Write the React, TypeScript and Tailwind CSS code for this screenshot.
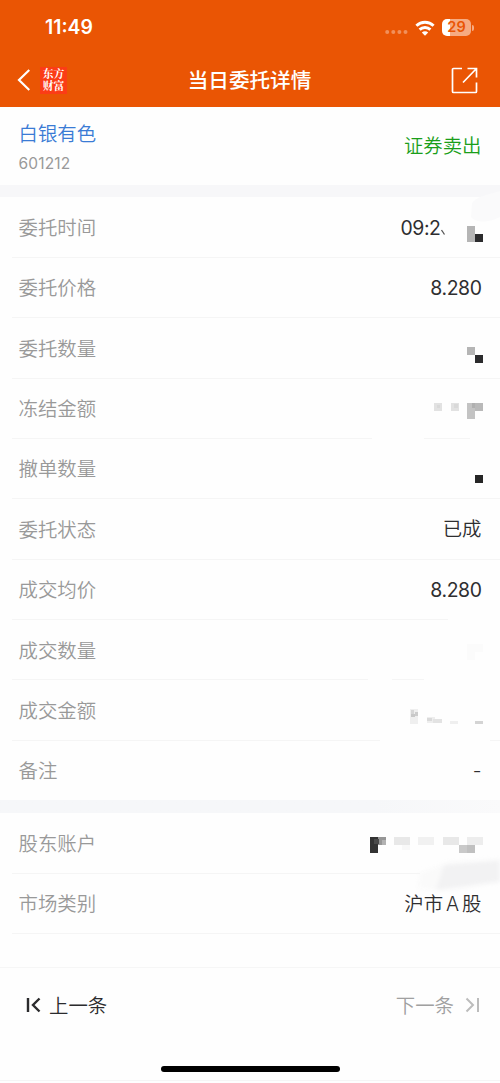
import React from 'react';

type Block = [x: number, y: number, width: number, height: number, fill: string];

interface DetailItem {
  label: string;
  value?: React.ReactNode;
  numeric?: boolean;
  blocks?: Block[];
  // visible parts of the divider under the row, as [from, to]
  divider?: [number, number][];
}

const FULL_DIVIDER: [number, number][] = [[12, 500]];

const ORDER_ITEMS: DetailItem[] = [
  {
    label: '委托时间',
    value: '09:2',
    numeric: true,
    blocks: [[467, 29, 8, 16, '#b5b5b5'], [475, 37, 8, 8, '#2b2b2d']],
  },
  { label: '委托价格', value: '8.280', numeric: true },
  { label: '委托数量', blocks: [[467, 29, 8, 8, '#b5b5b5'], [475, 37, 8, 8, '#2b2b2d']] },
  {
    label: '冻结金额',
    blocks: [
      [434, 25, 8, 8, '#e2e2e2'],
      [437, 27, 3, 3, '#d9d9d9'],
      [451, 25, 8, 8, '#e2e2e2'],
      [454, 26, 4, 4, '#d9d9d9'],
      [467, 25, 8, 16, '#c3c3c3'],
      [475, 25, 8, 8, '#b9b9b9'],
      [472, 25, 3, 5, '#b0b0b0'],
    ],
    divider: [[12, 372], [424, 470]],
  },
  { label: '撤单数量', blocks: [[475, 37, 8, 8, '#262626']] },
  { label: '委托状态', value: '已成' },
  { label: '成交均价', value: '8.280', numeric: true, divider: [[12, 448]] },
  {
    label: '成交数量',
    blocks: [[467, 25, 16, 8, '#fbfbfb'], [467, 33, 8, 8, '#fbfbfb']],
    divider: [[12, 368], [392, 424]],
  },
  {
    label: '成交金额',
    blocks: [
      [410, 29, 8, 15, '#efefef'],
      [411, 30, 3, 4, '#d6d6d6'],
      [415, 32, 3, 4, '#cccccc'],
      [411, 34, 4, 3, '#c8c8c8'],
      [427, 37, 8, 6, '#eeeeee'],
      [427, 38, 5, 3, '#dadada'],
      [433, 39, 9, 4, '#e3e3e3'],
      [450, 41, 8, 3, '#efefef'],
      [475, 41, 8, 3, '#d4d4d4'],
    ],
    divider: [[12, 380], [490, 500]],
  },
  { label: '备注', value: '-', divider: [] },
];

const ACCOUNT_ITEMS: DetailItem[] = [
  {
    label: '股东账户',
    blocks: [
      [370, 24, 8, 16, '#333333'],
      [378, 24, 8, 8, '#969696'],
      [374, 26, 5, 5, '#4a4a4a'],
      [382, 27, 4, 5, '#b2b2b2'],
      [394, 24, 16, 8, '#e8e8e8'],
      [402, 32, 8, 5, '#f8f8f8'],
      [418, 24, 16, 8, '#f1f1f1'],
      [443, 24, 16, 8, '#e8e8e8'],
      [467, 24, 16, 8, '#ededed'],
      [459, 32, 8, 8, '#c9c9c9'],
      [467, 32, 8, 8, '#c0c0c0'],
    ],
    divider: [[12, 420]],
  },
  { label: '市场类别', value: <>沪市<span className="mx-[3px]">A</span>股</> },
];

const StatusBar = () => (
  <div className="flex h-[54px] items-center justify-between pl-[45px] pr-[26px] pt-[2px]">
    <span className="text-[19.4px] font-semibold leading-none">11:49</span>
    <div className="flex items-center">
      <svg width="23" height="18" viewBox="0 0 23 18" fill="#fff" fillOpacity="0.35">
        <circle cx="2.2" cy="13" r="2" />
        <circle cx="8.3" cy="13" r="2" />
        <circle cx="14.4" cy="13" r="2" />
        <circle cx="20.5" cy="13" r="2" />
      </svg>
      <svg className="mb-px ml-[7px]" width="20" height="16" viewBox="0 0 20 16" fill="none" stroke="#fff" strokeWidth="2.9">
        <path d="M1.4 5.8C6.2 1.1 13.8 1.1 18.6 5.800" />
        <path d="M4.600 9.600c3-2.900 7.800-2.900 10.800 0" />
        <path d="M10 15.700l-3.200-3.200c1.700-1.600 4.700-1.600 6.400 0z" fill="#fff" stroke="none" />
      </svg>
      <div className="mb-px ml-[7px] flex h-[17px] w-[29px] items-center justify-center rounded-[5px] bg-linear-to-r from-white from-28% to-[#f6ab82] to-28%">
        <span className="text-[14.5px] font-semibold leading-none text-[#ea5504]">29</span>
      </div>
      <span className="ml-px h-[6px] w-[2px] rounded-r-full bg-[#f6ab82]" />
    </div>
  </div>
);

const NavBar = () => (
  <div className="flex h-[52px] items-center justify-between pl-[17px] pr-[22px]">
    <div className="flex w-[51px] items-center">
      <svg width="13" height="22" viewBox="0 0 13 22" fill="none" stroke="#fff" strokeWidth="2.2">
        <path d="M12.3 1L2 11l10.3 10" />
      </svg>
      <div className="ml-[10px] flex h-[27px] w-[27px] shrink-0 flex-col items-center justify-center bg-[#fb3c16] font-['Noto_Serif_CJK_SC','Noto_Sans_CJK_SC',serif] text-[10.8px] font-bold leading-[12px]">
        <div className="whitespace-pre-line text-center">{'东方\n财富'}</div>
      </div>
    </div>
    <h1 className="ml-[-20px] pt-[2px] text-[20.6px] font-medium leading-none">当日委托详情</h1>
    <svg width="27" height="27" viewBox="0 0 27 27" fill="none" stroke="#fff" strokeWidth="1.7">
      <path d="M11 1.500H2.500a1 1 0 0 0-1 1V24.500a1 1 0 0 0 1 1H24.500a1 1 0 0 0 1-1V15.500" />
      <path d="M16.500 1.500H25.500V10.500M25.500 1.500L12 15.500" />
    </svg>
  </div>
);

const DetailRow = ({ item }: { item: DetailItem }) => {
  const { label, value, numeric, blocks, divider = FULL_DIVIDER } = item;

  return (
    <div className="relative flex h-[60.35px] items-center justify-between px-[18.5px]">
      <span className="pt-[3px] text-[19.4px] font-[350] text-[#999]">{label}</span>
      {value && (
        <span className={`pt-[2px] text-[#2e2e30] ${numeric ? 'text-[19.4px] tracking-[-0.4px]' : 'text-[19.4px] font-[350]'} ${blocks ? 'mr-[41px]' : ''}`}>
          {value}
        </span>
      )}
      <svg className="pointer-events-none absolute left-0 top-0" width="500" height="61" viewBox="0 0 500 61" shapeRendering="crispEdges">
        {blocks?.map(([x, y, width, height, fill], i) => (
          <rect key={i} x={x} y={y} width={width} height={height} fill={fill} />
        ))}
        {value === '09:2' && <path d="M441.500 33l3 4.500" stroke="#555" strokeWidth="1.300" shapeRendering="auto" />}
        {divider.map(([from, to]) => (
          <rect key={from} x={from} y="60" width={to - from} height="1" fill="#f5f5f5" />
        ))}
      </svg>
    </div>
  );
};

const Pager = () => (
  <div className="flex h-[75px] items-center justify-between border-t border-[#f6f6f6] pl-[26px] pr-[20px]">
    <button className="flex items-center text-[19.4px] font-[350] text-[#2b2b2d]">
      <svg width="15" height="16" viewBox="0 0 15 16" fill="none" stroke="currentColor" strokeWidth="2.4">
        <path d="M2 1v14M13.500 1.500L7 8l6.500 6.500" />
      </svg>
      <span className="ml-[8px] pt-[3px]">上一条</span>
    </button>
    <button className="flex items-center text-[19.4px] font-[350] text-[#a0a0a0]">
      <span className="pt-[3px]">下一条</span>
      <svg className="ml-[11px]" width="15" height="16" viewBox="0 0 15 16" fill="none" stroke="#bcbcbc" strokeWidth="2">
        <path d="M13 1v14M1.500 1.500L8 8l-6.500 6.500" />
      </svg>
    </button>
  </div>
);

const App = () => {
  return (
    <div className="h-[1083px] w-[500px] overflow-hidden bg-[#fefefe] font-['Inter','Noto_Sans_CJK_SC',sans-serif]">
      <header className="h-[106.5px] bg-[#ea5504] text-white">
        <StatusBar />
        <NavBar />
      </header>

      <section className="flex h-[78px] items-center justify-between px-[18.5px]">
        <div className="flex flex-col pt-[3px]">
          <span className="text-[19.4px] font-[350] leading-[28px] text-[#3a7bd5]">白银有色</span>
          <span className="mt-[5px] text-[15.5px] leading-[22px] tracking-[0.15px] text-[#999]">601212</span>
        </div>
        <span className="pt-[2px] text-[19.4px] font-[350] text-[#1a9e1a]">证券卖出</span>
      </section>

      <div className="h-[12.5px] bg-[#f7f7f9]" />
      <section className="relative">
        {/* leftover brush smear */}
        <svg className="absolute right-0 top-[-8px]" width="32" height="38" viewBox="0 0 32 38">
          <path d="M4 14C8 8 18 6 32 2V28C20 34 8 34 3 28z" fill="#fafafb" />
        </svg>
        {ORDER_ITEMS.map((item) => (
          <DetailRow key={item.label} item={item} />
        ))}
      </section>

      <div className="h-[12.5px] bg-linear-to-r from-[#f6f7f9] from-75% to-[#fafafb]" />
      <section className="relative">
        <svg className="absolute right-0 top-[44px] blur-[2px]" width="90" height="38" viewBox="0 0 90 38">
          <path d="M10 16L40 5 90 2V22L60 30 28 34 8 31z" fill="#fafafa" />
          <path d="M34 8L96 3V24L66 28 26 33z" fill="#f2f2f3" />
        </svg>
        {ACCOUNT_ITEMS.map((item) => (
          <DetailRow key={item.label} item={item} />
        ))}
      </section>

      <footer className="mt-[33px]">
        <Pager />
        <div className="mx-auto mt-[24px] h-[6px] w-[179px] rounded-full bg-black" />
        <div className="mt-[8px] h-px bg-[#f5f5f5]" />
      </footer>
    </div>
  );
};

export default App;
